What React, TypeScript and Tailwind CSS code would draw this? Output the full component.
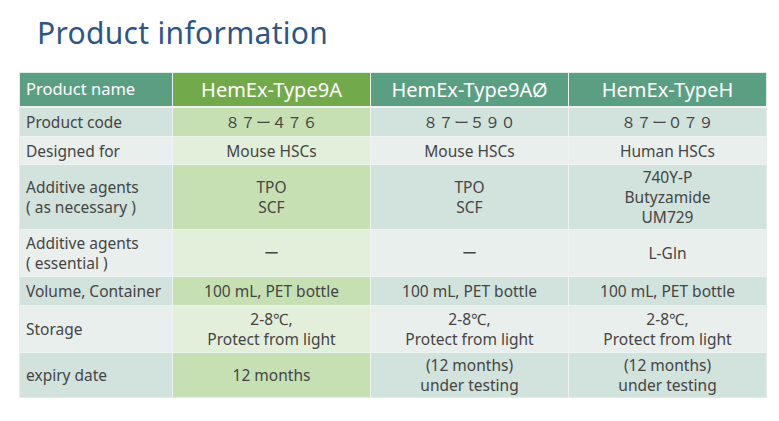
import React from "react";

type Row = {
  label: string[];
  cells: string[][];
  h: string;
  tone: "dark" | "light";
  mono?: boolean;
};

const rows: Row[] = [
  { label: ["Product code"], cells: [["８７ー４７６"], ["８７ー５９０"], ["８７ー０７９"]], h: "h-[28px]", tone: "dark", mono: true },
  { label: ["Designed for"], cells: [["Mouse HSCs"], ["Mouse HSCs"], ["Human HSCs"]], h: "h-[27px]", tone: "light" },
  { label: ["Additive agents", "( as necessary )"], cells: [["TPO", "SCF"], ["TPO", "SCF"], ["740Y-P", "Butyzamide", "UM729"]], h: "h-[64px]", tone: "dark" },
  { label: ["Additive agents", "( essential )"], cells: [["ー"], ["ー"], ["L-Gln"]], h: "h-[46px]", tone: "light" },
  { label: ["Volume, Container"], cells: [["100 mL, PET bottle"], ["100 mL, PET bottle"], ["100 mL, PET bottle"]], h: "h-[28px]", tone: "dark" },
  { label: ["Storage"], cells: [["2-8℃,", "Protect from light"], ["2-8℃,", "Protect from light"], ["2-8℃,", "Protect from light"]], h: "h-[46px]", tone: "light" },
  { label: ["expiry date"], cells: [["12 months"], ["(12 months)", "under testing"], ["(12 months)", "under testing"]], h: "h-[44px]", tone: "dark" },
];

const font = { fontFamily: '"Noto Sans", "Noto Sans CJK JP", sans-serif' };

export default function App() {
  return (
    <div className="w-[779px] h-[421px] bg-white relative overflow-hidden" style={font}>
      <h1 className="pl-[37px] pt-[13px] text-[30px] leading-[40px] text-[#2d5686] tracking-[0.3px]">
        Product information
      </h1>

      <div className="ml-[19px] mt-[19px] w-[748px] border border-[#e4ebe8] bg-[#eef3f1] flex flex-col gap-[1px]">
        <div className="grid grid-cols-[152px_197px_197px_197px] gap-[1px] h-[33px] mb-[1px]">
          <div className="bg-[#5b9f83] text-white text-[16.5px] flex items-center pl-[6px]">Product name</div>
          <div className="bg-[#72aa4b] text-white text-[20px] flex items-center justify-center">HemEx-Type9A</div>
          <div className="bg-[#5b9f83] text-white text-[20px] flex items-center justify-center">HemEx-Type9AØ</div>
          <div className="bg-[#5b9f83] text-white text-[20px] flex items-center justify-center">HemEx-TypeH</div>
        </div>

        {rows.map((r, i) => {
          const base = r.tone === "dark" ? "bg-[#d2e2dc]" : "bg-[#e8efed]";
          const hl = r.tone === "dark" ? "bg-[#c6e0b4]" : "bg-[#e2efda]";
          return (
            <div key={i} className={`grid grid-cols-[152px_197px_197px_197px] gap-[1px] ${r.h}`}>
              <div className={`${base} text-[#454545] text-[15.5px] leading-[20px] flex flex-col justify-center pl-[6px]`}>
                {r.label.map((l, j) => (
                  <span key={j}>{l}</span>
                ))}
              </div>
              {r.cells.map((c, k) => (
                <div
                  key={k}
                  className={`${k === 0 ? hl : base} text-[#454545] ${r.mono ? "text-[15px] tracking-[0.5px]" : "text-[15.5px]"} leading-[20px] flex flex-col items-center justify-center text-center`}
                >
                  {c.map((t, j) => (
                    <span key={j}>{t}</span>
                  ))}
                </div>
              ))}
            </div>
          );
        })}
      </div>
    </div>
  );
}
